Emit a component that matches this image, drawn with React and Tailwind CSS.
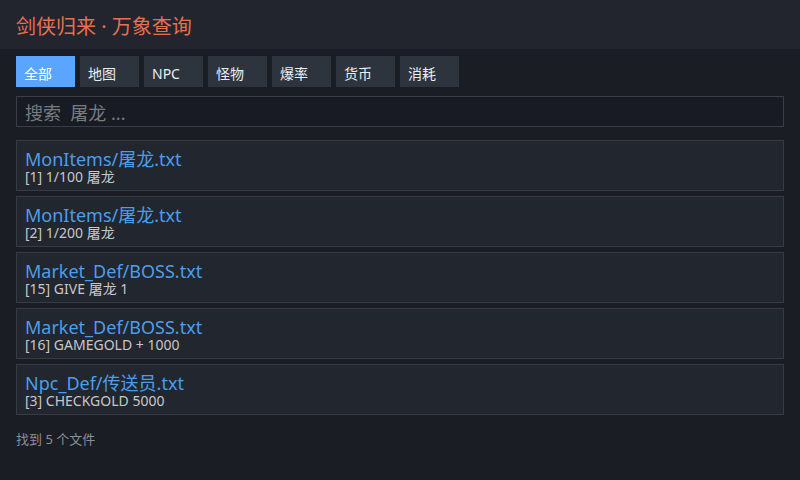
import React from 'react';

const tabs = ['全部', '地图', 'NPC', '怪物', '爆率', '货币', '消耗'];

const results = [
  { file: 'MonItems/屠龙.txt', line: '[1] 1/100 屠龙' },
  { file: 'MonItems/屠龙.txt', line: '[2] 1/200 屠龙' },
  { file: 'Market_Def/BOSS.txt', line: '[15] GIVE 屠龙 1' },
  { file: 'Market_Def/BOSS.txt', line: '[16] GAMEGOLD + 1000' },
  { file: 'Npc_Def/传送员.txt', line: '[3] CHECKGOLD 5000' },
];

export default function App() {
  return (
    <div
      className="w-[800px] h-[480px] bg-[#1b1d24] flex flex-col overflow-hidden"
      style={{ fontFamily: '"Noto Sans", "Noto Sans CJK SC", sans-serif' }}
    >
      <header className="h-[49px] bg-[#22252d] flex items-center px-4 shrink-0">
        <h1 className="text-[20px] leading-none text-[#e8704f] pt-[4px]">剑侠归来 · 万象查询</h1>
      </header>

      <div className="flex flex-col px-4 pt-[7px]">
        <div className="flex gap-[5px]">
          {tabs.map((t, i) => (
            <button
              key={t}
              className={
                i === 0
                  ? 'w-[59px] h-[31px] bg-[#5aa5ff] text-white text-[14px] text-left pl-2 pt-[3px]'
                  : 'w-[59px] h-[31px] bg-[#2e343d] text-[#eceef0] text-[14px] text-left pl-2 pt-[3px]'
              }
            >
              {t}
            </button>
          ))}
        </div>

        <div className="mt-[9px] h-[31px] border border-[#383d46] bg-[#181b22] flex items-center px-2">
          <span className="text-[18px] text-[#777b82] leading-none pt-[3px]">搜索&nbsp;&nbsp;屠龙 ...</span>
        </div>

        <div className="mt-[13px] flex flex-col gap-[5px]">
          {results.map((r, i) => (
            <div
              key={i}
              className="h-[51px] border border-[#363a43] bg-[#22262e] px-2 pt-[8px]"
            >
              <div className="text-[18px] leading-[20px] text-[#4a9eec]">{r.file}</div>
              <div className="text-[14px] leading-[16px] text-[#c6c8cb]">{r.line}</div>
            </div>
          ))}
        </div>

        <div className="mt-[15px] text-[13px] text-[#8b8f95]">找到 5 个文件</div>
      </div>
    </div>
  );
}
